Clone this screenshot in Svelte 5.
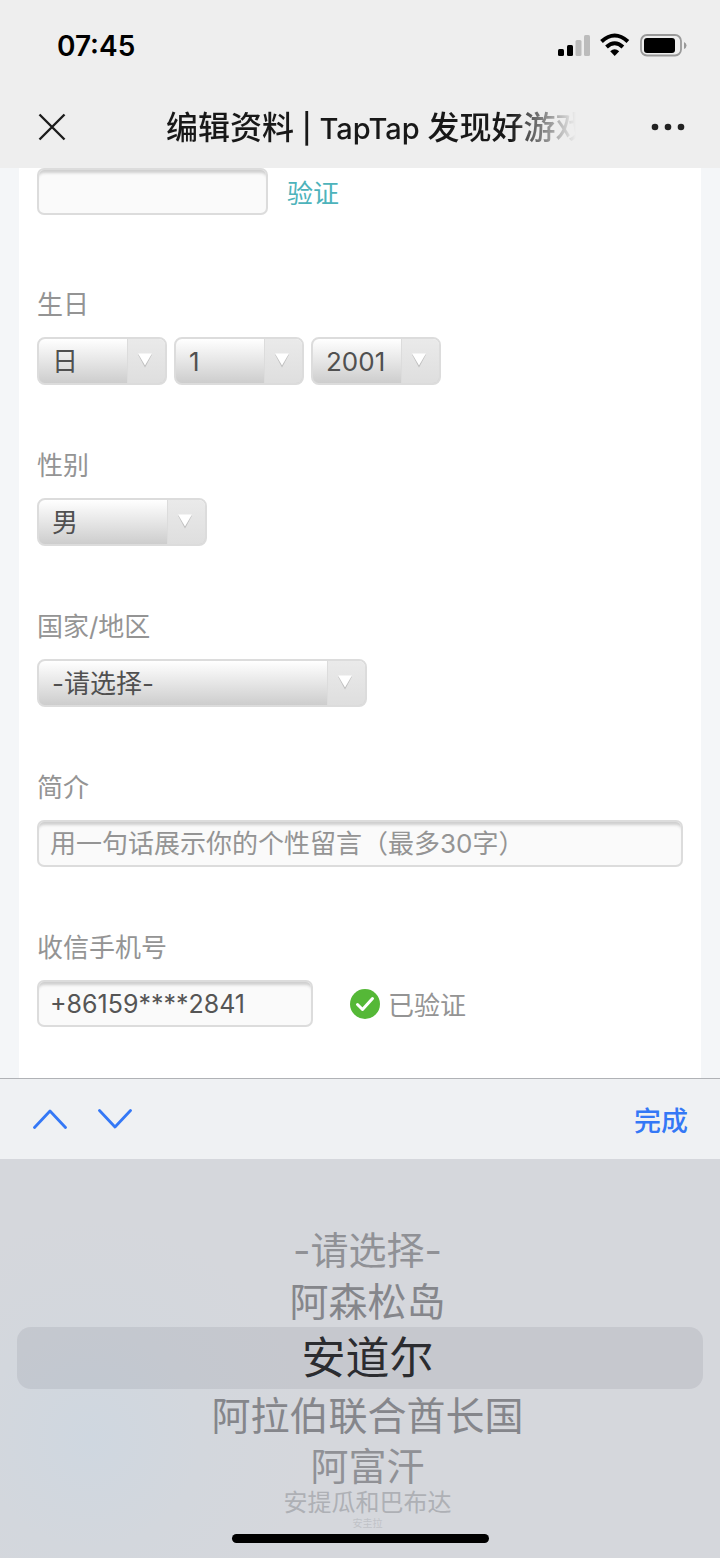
<script lang="ts">
  let day = $state('日');
  let month = $state('1');
  let year = $state('2001');
  let gender = $state('男');
  let region = $state('-请选择-');
  let email = $state('');
  let bio = $state('');
  let phone = $state('+86159****2841');

  // Rows of the region wheel, shrinking towards its lower edge.
  const rows = [
    { name: '-请选择-', size: 'mid' },
    { name: '阿森松岛', size: 'near' },
    { name: '安道尔', size: 'current' },
    { name: '阿拉伯联合酋长国', size: 'near' },
    { name: '阿富汗', size: 'mid' },
    { name: '安提瓜和巴布达', size: 'far' },
    { name: '安圭拉', size: 'edge' }
  ];
</script>

{#snippet arrow()}
  <svg class="arrow" viewBox="0 0 38 45" aria-hidden="true">
    <path d="M0 0h38v45H0z" fill="url(#arrow-bg)" />
    <path d="M.5 0v45" stroke="#dcdcdc" />
    <path d="M11 15.500h14l-7 13z" fill="#bdbdbd" />
    <path d="M11 14.500h14l-7 12z" fill="#fff" />
  </svg>
{/snippet}

<div class="screen">
  <header>
    <div class="status">
      <span class="time">07:45</span>
      <svg class="signal" width="130" height="26" viewBox="0 0 130 26" aria-hidden="true">
        <rect x="0" y="16" width="6" height="7" rx="1.500" />
        <rect x="9" y="12" width="6" height="11" rx="1.500" />
        <rect x="17.500" y="7" width="6" height="16" rx="1.500" fill="#bcbcbc" />
        <rect x="26" y="2" width="6" height="21" rx="1.500" fill="#bcbcbc" />
        <path d="M43.500 8.500q13.200-12 26.400 0M48.500 14q8.200-7.500 16.400 0" fill="none" stroke="#000" stroke-width="4" />
        <path d="M52.200 18.200q4.500-4 9 0l-4.500 4.800z" />
        <rect x="83" y="2" width="40" height="20.500" rx="6" fill="none" stroke="#999" stroke-width="1.800" />
        <rect x="86" y="5" width="31" height="15" rx="3" />
        <path d="M126 9q2.500 1 2.500 3.500T126 16z" fill="#999" />
      </svg>
    </div>
    <div class="nav">
      <button type="button" aria-label="关闭">
        <svg width="28" height="28" viewBox="0 0 28 28" fill="none" stroke="#1c1c1c" stroke-width="2.400"><path d="M1.500 1.500l25 25M26.500 1.500l-25 25" /></svg>
      </button>
      <h1>编辑资料<span>{' | TapTap '}</span>发现好游戏</h1>
      <button type="button" aria-label="更多">
        <svg width="34" height="8" viewBox="0 0 34 8" fill="#222"><circle cx="4" cy="4" r="3.300" /><circle cx="17" cy="4" r="3.300" /><circle cx="30" cy="4" r="3.300" /></svg>
      </button>
    </div>
  </header>

  <main>
    <form>
      <div class="line first">
        <input class="short" type="text" aria-label="邮箱" bind:value={email} />
        <a href="#verify">验证</a>
      </div>

      <div class="field">
        <label for="day">生日</label>
        <div class="dates">
          <span class="select date">
            <select id="day" bind:value={day}><option>日</option></select>
            {@render arrow()}
          </span>
          <span class="select date">
            <select aria-label="月" bind:value={month}><option>1</option></select>
            {@render arrow()}
          </span>
          <span class="select date">
            <select aria-label="年" bind:value={year}><option>2001</option></select>
            {@render arrow()}
          </span>
        </div>
      </div>

      <div class="field">
        <label for="gender">性别</label>
        <span class="select gender">
          <select id="gender" bind:value={gender}><option>男</option><option>女</option></select>
          {@render arrow()}
        </span>
      </div>

      <div class="field">
        <label for="region">国家/地区</label>
        <span class="select region">
          <select id="region" bind:value={region}>
            {#each rows as row}<option>{row.name}</option>{/each}
          </select>
          {@render arrow()}
        </span>
      </div>

      <div class="field">
        <label for="bio">简介</label>
        <input id="bio" type="text" placeholder="用一句话展示你的个性留言（最多30字）" bind:value={bio} />
      </div>

      <div class="field">
        <label for="phone">收信手机号</label>
        <div class="line">
          <input id="phone" class="phone" type="text" bind:value={phone} />
          <span class="verified">
            <svg width="30" height="30" viewBox="0 0 30 30" aria-hidden="true"><circle cx="15" cy="15" r="15" fill="#55b837" /><path d="M7.500 15.500l5 5 10-11" fill="none" stroke="#fff" stroke-width="3" stroke-linecap="round" stroke-linejoin="round" /></svg>
            已验证
          </span>
        </div>
      </div>
    </form>
  </main>

  <!-- Gradient shared by every select arrow -->
  <svg class="defs" width="0" height="0" aria-hidden="true">
    <linearGradient id="arrow-bg" x1="0" y1="0" x2="0" y2="1">
      <stop offset="0" stop-color="#eaeaea" />
      <stop offset="1" stop-color="#dedede" />
    </linearGradient>
  </svg>

  <div class="toolbar">
    <button type="button" aria-label="上一项">
      <svg width="34" height="20" viewBox="0 0 34 20"><path d="M1.500 18.500L17 2l15.500 16.500" /></svg>
    </button>
    <button type="button" aria-label="下一项">
      <svg width="34" height="20" viewBox="0 0 34 20"><path d="M1.500 1.500L17 18 32.500 1.500" /></svg>
    </button>
    <button type="button" class="done">完成</button>
  </div>

  <div class="picker">
    <div class="wheel" role="listbox" aria-label="国家/地区">
      {#each rows as row}
        <button type="button" role="option" aria-selected={row.size === 'current'} class="row {row.size}" onclick={() => (region = row.name)}>{row.name}</button>
      {/each}
    </div>
    <div class="home"></div>
  </div>
</div>

<style>
  :global(body) {
    margin: 0;
    background: #d5d7dc;
  }
  .screen,
  .screen :is(button, input, select) {
    font-family: Inter, "Noto Sans CJK SC", sans-serif;
  }
  .screen {
    display: flex;
    flex-direction: column;
    min-height: 100vh;
  }
  button {
    display: flex;
    align-items: center;
    justify-content: center;
    padding: 0;
    border: 0;
    background: none;
    cursor: pointer;
  }

  header {
    background: #eeeeee;
  }
  .status {
    display: flex;
    align-items: center;
    justify-content: space-between;
    height: 86px;
    padding: 6px 32px 0 57px;
    box-sizing: border-box;
  }
  .time {
    font-size: 28px;
    font-weight: 600;
    color: #000;
  }
  .nav {
    display: grid;
    grid-template-columns: 104px 1fr 104px;
    align-items: center;
    height: 82px;
  }
  h1 {
    margin: 0 40px 0 62px;
    padding-top: 2px;
    overflow: hidden;
    white-space: nowrap;
    font-size: 32px;
    line-height: 48px;
    font-weight: 500;
    color: #181818;
    mask-image: linear-gradient(to right, #000 84%, transparent);
  }
  h1 span {
    font-size: 29px;
  }

  main {
    flex: 1;
    padding: 0 19px;
    background: #f4f6f8;
  }
  form {
    min-height: 100%;
    padding: 0 18px 51px;
    box-sizing: border-box;
    background: #fff;
    font-size: 26px;
    font-weight: 380;
    color: #949494;
  }
  .line {
    display: flex;
    align-items: center;
    gap: 19px;
  }
  .line a {
    color: #4db3bb;
    text-decoration: none;
  }
  .field {
    display: flex;
    flex-direction: column;
    align-items: flex-start;
    gap: 14px;
    margin-top: 63px;
  }
  .first + .field {
    margin-top: 72px;
  }
  label {
    line-height: 36px;
  }
  input {
    width: 100%;
    height: 47px;
    padding: 0 11px;
    box-sizing: border-box;
    border: 2px solid #dcdcdc;
    border-radius: 7px;
    background: #fafafa;
    box-shadow: inset 0 5px 3px -2px #cfcfcf;
    font-size: 25px;
    font-weight: 380;
    color: #555;
  }
  input::placeholder {
    font-size: 26px;
    color: #949494;
    opacity: 1;
  }
  .short {
    width: 231px;
  }
  .phone {
    width: 276px;
  }
  .verified {
    display: flex;
    align-items: center;
    gap: 8px;
    margin-left: 18px;
  }

  .dates {
    display: flex;
    gap: 7px;
  }
  .select {
    display: grid;
    grid-template-columns: 1fr 38px;
    height: 48px;
    box-sizing: border-box;
    overflow: hidden;
    border: 2px solid #dcdcdc;
    border-radius: 8px;
    background: linear-gradient(#fff, #cdcdcd);
  }
  select {
    grid-area: 1 / 1 / 2 / 3;
    min-width: 0;
    padding: 0 38px 0 13px;
    border: 0;
    appearance: none;
    background: none;
    font-size: 26px;
    font-weight: 380;
    color: #505050;
  }
  .arrow {
    grid-area: 1 / 2;
    width: 38px;
    height: 45px;
    pointer-events: none;
  }
  .date {
    width: 130px;
  }
  .gender {
    width: 170px;
  }
  .region {
    width: 330px;
  }
  .defs {
    position: absolute;
  }

  .toolbar {
    display: flex;
    align-items: center;
    gap: 31px;
    height: 81px;
    padding: 0 32px 0 33px;
    box-sizing: border-box;
    border-top: 1px solid #b0b2b6;
    background: #eff1f3;
  }
  .toolbar path {
    fill: none;
    stroke: #3478f6;
    stroke-width: 2.8;
    stroke-linecap: round;
    stroke-linejoin: round;
  }
  .done {
    margin-left: auto;
    font-size: 27px;
    font-weight: 500;
    color: #3478f6;
  }

  .picker {
    padding: 66px 17px 15px;
    background: radial-gradient(circle at 90px 280px, #cfd7e0, #d3d7dd 110px, #d5d7dc 220px);
  }
  .wheel {
    display: flex;
    flex-direction: column;
  }
  .row {
    height: 50px;
    padding-left: 15px;
    white-space: nowrap;
    font-size: 38px;
    line-height: 1;
    font-weight: 380;
    color: #909196;
  }
  .near {
    height: 52px;
    font-size: 39px;
    color: #85868b;
  }
  .current {
    height: 62px;
    border-radius: 14px;
    background: rgba(115, 115, 125, 0.15);
    font-size: 44px;
    color: #2b2c30;
  }
  .far {
    height: 24px;
    font-size: 24px;
    color: #aeb0b5;
  }
  .edge {
    height: 12px;
    margin-top: 2px;
    font-size: 10px;
    color: #c0c2c7;
  }
  .home {
    width: 257px;
    height: 9px;
    margin: 5px auto 0;
    border-radius: 5px;
    background: #000;
  }
</style>
